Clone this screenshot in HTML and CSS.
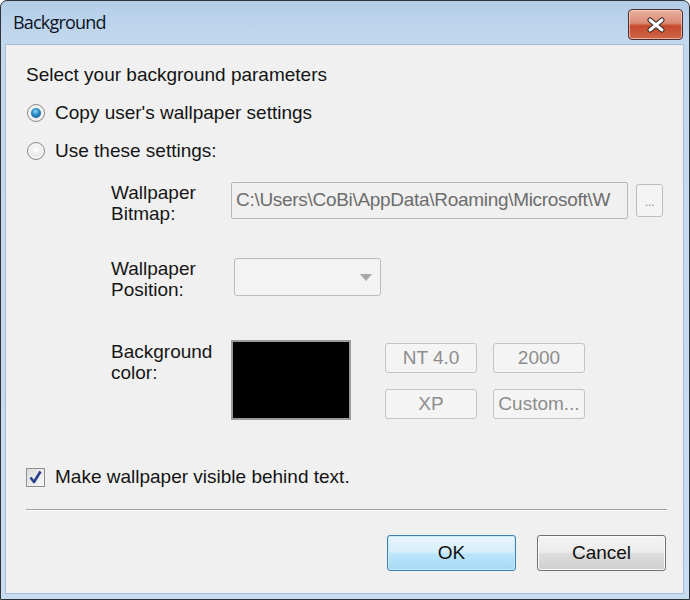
FILE: index.html
```html
<!DOCTYPE html>
<html>
<head>
<meta charset="utf-8">
<link rel="stylesheet" href="styles.css">
</head>
<body>
<div class="window">
  <div class="titlebar">
    <span class="title">Background</span>
    <div class="close">
      <svg width="22" height="16" viewBox="0 0 22 16"><path d="M5 3 L17 13 M17 3 L5 13" stroke="#3a2a2a" stroke-width="5" stroke-linecap="round"/><path d="M5 3 L17 13 M17 3 L5 13" stroke="#ffffff" stroke-width="3" stroke-linecap="round"/></svg>
    </div>
  </div>
  <div class="client">
    <div class="heading">Select your background parameters</div>
    <div class="option first">
      <span class="radio checked"><span class="dot"></span></span>
      <span>Copy user's wallpaper settings</span>
    </div>
    <div class="option second">
      <span class="radio"></span>
      <span>Use these settings:</span>
    </div>

    <div class="form-row row-bitmap">
      <div class="label">Wallpaper<br>Bitmap:</div>
      <div class="textbox"><span class="path">C:\Users\CoBi\AppData\Roaming\Microsoft\W</span></div>
      <div class="browse">...</div>
    </div>

    <div class="form-row row-position">
      <div class="label">Wallpaper<br>Position:</div>
      <div class="combo">
        <svg width="12" height="7" viewBox="0 0 12 7"><path d="M0 0 H12 L6 7 Z" fill="#a8a8a8"/></svg>
      </div>
    </div>

    <div class="form-row row-color">
      <div class="label">Background<br>color:</div>
      <div class="swatch"></div>
      <div class="presets">
        <div class="pbtn">NT 4.0</div>
        <div class="pbtn">2000</div>
        <div class="pbtn">XP</div>
        <div class="pbtn">Custom...</div>
      </div>
    </div>

    <div class="option check-row">
      <span class="checkbox">
        <svg width="13" height="14" viewBox="0 0 13 14"><path d="M1.5 7.5 L5 12 L11.5 1.5" fill="none" stroke="#2b3f8f" stroke-width="2.6" stroke-linejoin="round"/></svg>
      </span>
      <span>Make wallpaper visible behind text.</span>
    </div>

    <div class="separator"></div>

    <div class="actions">
      <div class="btn default">OK</div>
      <div class="btn">Cancel</div>
    </div>
  </div>
</div>
</body>
</html>
```

FILE: styles.css
```css
html, body {
  margin: 0;
  padding: 0;
  background: #ffffff;
}

.window {
  width: 690px;
  height: 600px;
  box-sizing: border-box;
  border: 1px solid #2e3338;
  border-radius: 7px 7px 0 0;
  background: linear-gradient(#b4cde8, #c2d8ee 40px, #c8ddf1);
  display: flex;
  flex-direction: column;
  font-family: "Liberation Sans", Arial, sans-serif;
  color: #141414;
  overflow: hidden;
}

.titlebar {
  height: 43px;
  flex: none;
  display: flex;
  align-items: flex-start;
  justify-content: space-between;
  padding: 0 6px 0 12px;
}

.title {
  font-family: "Open Sans", "Noto Sans", sans-serif;
  font-size: 18px;
  color: #0c1424;
  margin-top: 9px;
  letter-spacing: -0.8px;
}

.close {
  margin-top: 8px;
  width: 55px;
  height: 31px;
  box-sizing: border-box;
  border: 1px solid #4a2e2e;
  border-radius: 4px;
  background: linear-gradient(#eab2a2, #dc8a74 45%, #c5482c 55%, #d06848);
  display: flex;
  align-items: center;
  justify-content: center;
  box-shadow: inset 0 0 0 1px rgba(255,220,210,0.6);
}

.client {
  flex: 1;
  margin: 0 5px 5px 4px;
  background: #f0f0f0;
  border: 1px solid #a9bdd2;
  padding: 19px 20px 0 20px;
  font-size: 19px;
}

.heading {
  line-height: 22px;
  height: 22px;
}

.option {
  display: flex;
  align-items: center;
  gap: 10px;
  height: 26px;
}

.option.first { margin-top: 14px; }
.option.second { margin-top: 12px; }

.radio {
  width: 18px;
  height: 18px;
  box-sizing: border-box;
  border-radius: 50%;
  border: 1px solid #8a8a8a;
  background: radial-gradient(circle at 50% 40%, #ffffff 0%, #e6e6e6 55%, #cfcfcf 100%);
  display: flex;
  align-items: center;
  justify-content: center;
  margin-left: 1px;
  box-shadow: inset 0 0 0 2px #f4f4f4;
}

.radio .dot {
  width: 10px;
  height: 10px;
  border-radius: 50%;
  background: radial-gradient(circle at 45% 35%, #9ad4f0 0%, #2a8fc6 40%, #0b4f86 100%);
}

.checkbox {
  width: 19px;
  height: 19px;
  box-sizing: border-box;
  border: 1px solid #8e8f8f;
  background: linear-gradient(135deg, #dcdcdc, #f8f8f8);
  display: flex;
  align-items: center;
  justify-content: center;
}

.form-row {
  display: flex;
  align-items: flex-start;
  margin-left: 85px;
}

.label {
  width: 120px;
  flex: none;
  line-height: 21px;
  color: #161616;
}

.row-bitmap {
  margin-top: 18px;
  height: 45px;
}

.textbox {
  width: 403px;
  height: 37px;
  box-sizing: border-box;
  border: 1px solid #b6b6b6;
  border-radius: 2px;
  background: #f0f0f0;
  color: #6d6d6d;
  line-height: 34px;
  padding-left: 4px;
  white-space: nowrap;
  overflow: hidden;
  letter-spacing: -0.3px;
}

.browse {
  margin-left: 8px;
  margin-top: 2px;
  width: 27px;
  height: 33px;
  box-sizing: border-box;
  border: 1px solid #bdbdbd;
  border-radius: 3px;
  background: #f4f4f4;
  color: #8a8a8a;
  font-size: 12px;
  text-align: center;
  line-height: 26px;
  padding-top: 4px;
}

.row-position {
  margin-top: 31px;
  height: 45px;
}

.combo {
  margin-left: 3px;
  width: 147px;
  height: 38px;
  box-sizing: border-box;
  border: 1px solid #bcbcbc;
  border-radius: 3px;
  background: #f3f3f3;
  display: flex;
  align-items: center;
  justify-content: flex-end;
  padding-right: 8px;
}

.row-color {
  margin-top: 38px;
  height: 80px;
}

.swatch {
  width: 120px;
  height: 80px;
  box-sizing: border-box;
  border: 2px solid #9a9a9a;
  background: #000000;
  margin-top: -1px;
}

.presets {
  margin-left: 34px;
  margin-top: 2px;
  display: grid;
  grid-template-columns: 92px 92px;
  grid-auto-rows: 30px;
  column-gap: 16px;
  row-gap: 16px;
}

.pbtn {
  box-sizing: border-box;
  border: 1px solid #c4c4c4;
  border-radius: 3px;
  background: #f4f4f4;
  color: #8d8d8d;
  text-align: center;
  line-height: 28px;
}

.check-row {
  margin-top: 43px;
}

.separator {
  margin-top: 19px;
  height: 0;
  border-top: 1px solid #a0a0a0;
  border-bottom: 1px solid #ffffff;
  width: 641px;
}

.actions {
  margin-top: 24px;
  display: flex;
  justify-content: flex-end;
  gap: 21px;
  width: 640px;
}

.btn {
  width: 129px;
  height: 36px;
  box-sizing: border-box;
  border: 1px solid #707070;
  border-radius: 3px;
  background: linear-gradient(#f4f4f4, #ebebeb 48%, #dddddd 52%, #cfcfcf);
  box-shadow: inset 0 0 0 1px #fbfbfb;
  text-align: center;
  line-height: 34px;
  font-size: 19px;
  color: #111;
}

.btn.default {
  border-color: #3c7fb1;
  background: linear-gradient(#e9f6fd, #d5eefb 48%, #bde6fd 52%, #a7d9f5);
  box-shadow: inset 0 0 0 1px #c8ecf8;
}
```
